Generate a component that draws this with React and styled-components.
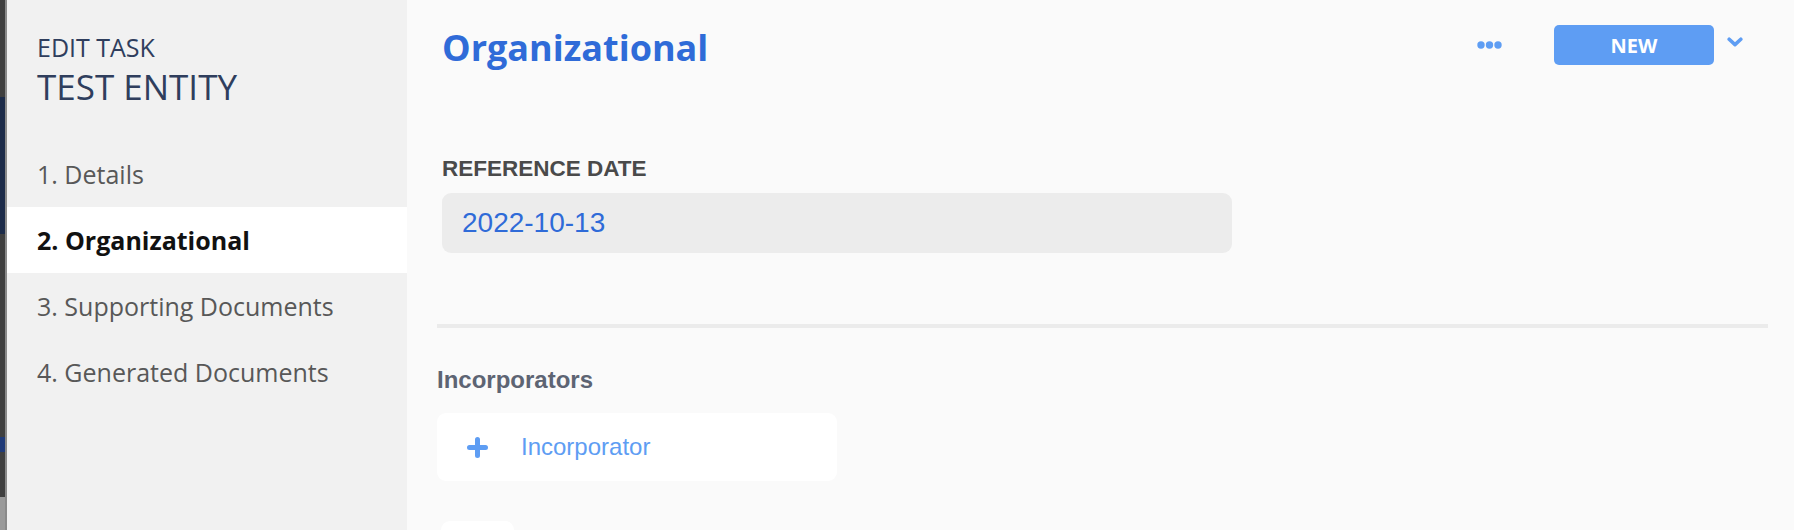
import React from "react";
import styled, { createGlobalStyle } from "styled-components";

const GlobalStyle = createGlobalStyle`
  html, body {
    margin: 0;
    padding: 0;
    background: #fafafa;
  }
  body {
    font-family: "Open Sans", "Liberation Sans", sans-serif;
  }
  * {
    box-sizing: border-box;
  }
`;

const Page = styled.div`
  display: flex;
  width: 1794px;
  height: 530px;
  overflow: hidden;
`;

// strip of the page behind the dialog
const Backdrop = styled.div`
  width: 7px;
  flex-shrink: 0;
  display: flex;
  flex-direction: column;
  background: #3f3f3f;
  border-right: 2px solid #8a8a8a;
`;

const BackdropBand = styled.div`
  height: ${(p) => p.h}px;
  background: ${(p) => p.color};
  flex-shrink: 0;
`;

const Sidebar = styled.aside`
  width: 400px;
  flex-shrink: 0;
  background: #f1f1f1;
`;

const SideHeader = styled.div`
  padding: 32px 30px 0 30px;
  height: 141px;
  color: #2f3e5d;
`;

const Eyebrow = styled.div`
  font-size: 25px;
  line-height: 30px;
  font-weight: 400;
  text-transform: uppercase;
`;

const EntityName = styled.div`
  margin-top: 4px;
  font-size: 35px;
  line-height: 42px;
  font-weight: 400;
  text-transform: uppercase;
`;

const StepList = styled.nav``;

const Step = styled.div`
  height: 66px;
  line-height: 66px;
  padding-left: 30px;
  font-size: 25px;
  color: ${(p) => (p.active ? "#111111" : "#585858")};
  font-weight: ${(p) => (p.active ? 700 : 400)};
  background: ${(p) => (p.active ? "#ffffff" : "transparent")};
  white-space: nowrap;
`;

const Main = styled.main`
  flex: 1;
  background: #fafafa;
  padding: 25px 26px 0 30px;
`;

const Header = styled.div`
  display: flex;
  align-items: flex-start;
  padding-left: 5px;
  padding-right: 25px;
`;

const Title = styled.h1`
  margin: 0;
  flex: 1;
  font-size: 36px;
  line-height: 46px;
  font-weight: 700;
  color: #2f6bd8;
`;

const IconButton = styled.button`
  height: 40px;
  display: flex;
  align-items: center;
  background: none;
  border: 0;
  padding: 0;
  color: #5e9df3;
  margin-right: ${(p) => p.gap || 0}px;
  padding-bottom: ${(p) => p.lift || 0}px;
`;

const NewButton = styled.button`
  width: 160px;
  height: 40px;
  border: 0;
  border-radius: 5px;
  background: #5e9df3;
  color: #ffffff;
  font-family: "Open Sans", sans-serif;
  font-size: 20px;
  font-weight: 700;
  margin-right: 13px;
`;

const Field = styled.div`
  padding-left: 5px;
  margin-top: 85px;
`;

const FieldLabel = styled.div`
  font-family: "Liberation Sans", Arial, sans-serif;
  font-size: 22.5px;
  line-height: 26px;
  font-weight: 700;
  color: #4a4a4a;
  text-transform: uppercase;
`;

const DateInput = styled.div`
  margin-top: 11px;
  width: 790px;
  height: 60px;
  border-radius: 9px;
  background: #ececec;
  padding-left: 20px;
  display: flex;
  align-items: center;
  font-family: "Liberation Sans", Arial, sans-serif;
  font-size: 28px;
  color: #2f6bd8;
`;

const Divider = styled.hr`
  margin: 71px 0 0 0;
  border: 0;
  height: 4px;
  background: #ebebeb;
`;

const SectionTitle = styled.h2`
  margin: 38px 0 0 0;
  font-family: "Liberation Sans", Arial, sans-serif;
  font-size: 24px;
  line-height: 28px;
  font-weight: 700;
  color: #5d6473;
`;

const AddCard = styled.button`
  margin-top: 19px;
  width: 400px;
  height: 68px;
  border: 0;
  border-radius: 9px;
  background: #ffffff;
  display: flex;
  align-items: center;
  gap: 33px;
  padding: 0 0 0 30px;
  color: #5e9df3;
  font-family: "Liberation Sans", Arial, sans-serif;
  font-size: 24px;
  text-align: left;
`;

const StubCard = styled.div`
  margin: 40px 0 0 4px;
  width: 73px;
  height: 60px;
  border-radius: 9px;
  background: #ffffff;
`;

const steps = [
  "1. Details",
  "2. Organizational",
  "3. Supporting Documents",
  "4. Generated Documents",
];

const App = () => {
  return (
    <>
      <GlobalStyle />
      <Page>
        <Backdrop>
          <BackdropBand h={97} color="#3f3f3f" />
          <BackdropBand h={137} color="#1c2b49" />
          <BackdropBand h={203} color="#3f3f3f" />
          <BackdropBand h={15} color="#1f3a78" />
          <BackdropBand h={45} color="#3f3f3f" />
          <BackdropBand h={33} color="#9a9a9a" />
        </Backdrop>

        <Sidebar>
          <SideHeader>
            <Eyebrow>Edit Task</Eyebrow>
            <EntityName>Test Entity</EntityName>
          </SideHeader>
          <StepList>
            {steps.map((s, i) => (
              <Step key={s} active={i === 1}>
                {s}
              </Step>
            ))}
          </StepList>
        </Sidebar>

        <Main>
          <Header>
            <Title>Organizational</Title>
            <IconButton gap={52} aria-label="More">
              <svg width="25" height="8" viewBox="0 0 25 8">
                <circle cx="4" cy="4" r="3.7" fill="currentColor" />
                <circle cx="12.5" cy="4" r="3.7" fill="currentColor" />
                <circle cx="21" cy="4" r="3.7" fill="currentColor" />
              </svg>
            </IconButton>
            <NewButton>NEW</NewButton>
            <IconButton lift={6} aria-label="Options">
              <svg width="16" height="10" viewBox="0 0 16 10">
                <polyline
                  points="2.2,2.2 8,7.6 13.8,2.2"
                  fill="none"
                  stroke="currentColor"
                  strokeWidth="3.6"
                  strokeLinecap="round"
                  strokeLinejoin="round"
                />
              </svg>
            </IconButton>
          </Header>

          <Field>
            <FieldLabel>Reference Date</FieldLabel>
            <DateInput>2022-10-13</DateInput>
          </Field>

          <Divider />

          <SectionTitle>Incorporators</SectionTitle>
          <AddCard>
            <svg width="21" height="21" viewBox="0 0 21 21">
              <path
                d="M10.5 2.5v16M2.5 10.5h16"
                stroke="currentColor"
                strokeWidth="5"
                strokeLinecap="round"
              />
            </svg>
            <span>Incorporator</span>
          </AddCard>
          <StubCard />
        </Main>
      </Page>
    </>
  );
};

export default App;
